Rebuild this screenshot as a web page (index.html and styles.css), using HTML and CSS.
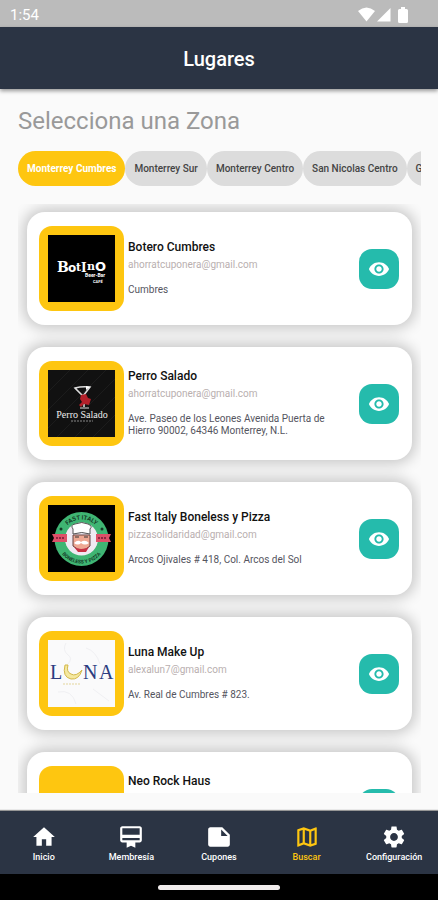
FILE: index.html
```html
<!DOCTYPE html>
<html lang="es">
<head>
    <meta charset="UTF-8">
    <meta name="viewport" content="width=device-width, initial-scale=1.0">
    <title>Lugares</title>
    <link rel="stylesheet" href="styles.css">
</head>
<body>

    <!-- Iconos compartidos -->
    <svg class="iconos" aria-hidden="true">
        <symbol id="ojo" viewBox="0 0 24 24">
            <path d="M12 4.5C7 4.5 2.73 7.61 1 12c1.73 4.39 6 7.5 11 7.5s9.27-3.11 11-7.5c-1.73-4.39-6-7.5-11-7.5zM12 17c-2.76 0-5-2.24-5-5s2.24-5 5-5 5 2.24 5 5-2.24 5-5 5zm0-8c-1.66 0-3 1.34-3 3s1.34 3 3 3 3-1.34 3-3-1.34-3-3-3z"/>
        </symbol>
    </svg>

    <!-- Barra de estado -->
    <div class="estado">
        <span>1:54</span>
        <div class="estado-iconos">
            <svg width="17" height="15" viewBox="0 0 17 15"><path d="M0 4Q8.500-3 17 4L8.500 14.500z"/></svg>
            <svg width="15" height="15" viewBox="0 0 15 15"><path d="M14.500 1v13.500H1z"/></svg>
            <svg class="bateria" width="10" height="16" viewBox="0 0 10 16"><path d="M3 0h4v2h1.500Q10 2 10 3.500v11Q10 16 8.500 16h-7Q0 16 0 14.500v-11Q0 2 1.500 2H3z"/></svg>
        </div>
    </div>

    <header class="encabezado">
        <h1>Lugares</h1>
    </header>

    <main class="contenido">
        <h2>Selecciona una Zona</h2>

        <!-- Zonas -->
        <div class="zonas">
            <button class="zona activa">Monterrey Cumbres</button>
            <button class="zona">Monterrey Sur</button>
            <button class="zona">Monterrey Centro</button>
            <button class="zona">San Nicolas Centro</button>
            <button class="zona">Guadalupe</button>
        </div>

        <!-- Lista de lugares -->
        <div class="lugares">
            <article class="lugar">
                <div class="logo">
                    <svg viewBox="0 0 67 67" role="img" aria-label="Botero">
                        <rect width="67" height="67" fill="#000"/>
                        <g fill="#fff" font-family="DejaVu Serif, serif" font-weight="bold">
                            <text x="9" y="37" font-size="14">B</text>
                            <text x="20" y="37" font-size="12" font-family="DejaVu Sans, sans-serif">o</text>
                            <text x="28" y="36" font-size="11">t</text>
                            <text x="33" y="37" font-size="12">I</text>
                            <text x="39" y="35" font-size="11">n</text>
                            <text x="47" y="36" font-size="13" font-family="DejaVu Sans, sans-serif">O</text>
                            <text x="37" y="42" font-size="5" font-family="Roboto, sans-serif">Beer-Bar</text>
                            <text x="45" y="48" font-size="4" font-family="Roboto, sans-serif">CAFÉ</text>
                        </g>
                    </svg>
                </div>
                <div class="datos">
                    <h3>Botero Cumbres</h3>
                    <p class="correo">ahorratcuponera@gmail.com</p>
                    <p class="direccion">Cumbres</p>
                </div>
                <button class="ver" aria-label="Ver Botero Cumbres"><svg><use href="#ojo"/></svg></button>
            </article>

            <article class="lugar">
                <div class="logo">
                    <svg viewBox="0 0 67 67" role="img" aria-label="Perro Salado">
                        <rect width="67" height="67" fill="#111"/>
                        <path d="M0 22L22 0M0 40L40 0M0 58L58 0M9 67L67 9M27 67L67 27M45 67L67 45" stroke="#1c1c1c"/>
                        <path d="M27 18q7-2 15-1l-7 9zM36 27v10" fill="none" stroke="#ddd" stroke-width="1.500"/>
                        <path d="M38 16l4 1-4 3z" fill="#fff"/>
                        <path d="M33 25l5-1 2 4 3 1-2 6-5-1-3 3-2-2 3-3-2-3z" fill="#b3202a"/>
                        <path d="M32 38h9" stroke="#ddd"/>
                        <text x="34" y="48" font-size="10" fill="#eee" text-anchor="middle" font-family="Liberation Serif, serif">Perro Salado</text>
                        <path d="M23 51h22" stroke="#888" stroke-dasharray="2 1"/>
                    </svg>
                </div>
                <div class="datos">
                    <h3>Perro Salado</h3>
                    <p class="correo">ahorratcuponera@gmail.com</p>
                    <p class="direccion">Ave. Paseo de los Leones Avenida Puerta de Hierro 90002, 64346 Monterrey, N.L.</p>
                </div>
                <button class="ver" aria-label="Ver Perro Salado"><svg><use href="#ojo"/></svg></button>
            </article>

            <article class="lugar">
                <div class="logo">
                    <svg viewBox="0 0 67 67" role="img" aria-label="Fast Italy">
                        <defs>
                            <path id="arco-arriba" d="M14 34a19.500 19.500 0 0 1 39 0"/>
                            <path id="arco-abajo" d="M9 34a24.500 24.500 0 0 0 49 0"/>
                        </defs>
                        <rect width="67" height="67" fill="#000"/>
                        <circle cx="33.500" cy="34" r="27" fill="#3fb573"/>
                        <circle cx="33.500" cy="34" r="16.500" fill="#efeaf2"/>
                        <g font-family="Roboto, sans-serif" font-size="6" font-weight="bold" fill="#153b27" text-anchor="middle">
                            <text><textPath href="#arco-arriba" startOffset="50%">FAST ITALY</textPath></text>
                            <text font-size="5"><textPath href="#arco-abajo" startOffset="50%">BONELESS Y PIZZA</textPath></text>
                        </g>
                        <path d="M4 29h15v8H4l2-4zM63 29H48v8h15l-2-4z" fill="#dd5068"/>
                        <path d="M8 33h9M50 33h9" stroke="#8d2740" stroke-width="2" stroke-dasharray="2 1"/>
                        <circle cx="13" cy="24" r="1.500" fill="#153b27"/>
                        <circle cx="54" cy="24" r="1.500" fill="#153b27"/>
                        <path d="M25 30h17v11q-8 8-17 0z" fill="#eea893" stroke="#644"/>
                        <path d="M25 29v-5q-3-4 2-5 7-3 13 0 5 2 2 5v5q-8-3-17 0z" fill="#fff" stroke="#555"/>
                        <path d="M27 32h4M36 32h4" stroke="#333"/>
                        <path d="M26 38q4-4 7-1 4-3 8 1-4 3-8 0-3 3-7 0z" fill="#fff"/>
                        <path d="M26 42q7 4 15 0l-3 5h-8z" fill="#c73245"/>
                    </svg>
                </div>
                <div class="datos">
                    <h3>Fast Italy Boneless y Pizza</h3>
                    <p class="correo">pizzasolidaridad@gmail.com</p>
                    <p class="direccion">Arcos Ojivales # 418, Col. Arcos del Sol</p>
                </div>
                <button class="ver" aria-label="Ver Fast Italy Boneless y Pizza"><svg><use href="#ojo"/></svg></button>
            </article>

            <article class="lugar">
                <div class="logo">
                    <svg viewBox="0 0 67 67" role="img" aria-label="Luna">
                        <rect width="67" height="67" fill="#fafafb"/>
                        <path d="M18 3q-4 7 2 12 5 3 0 9M38 8q10 3 14 16M10 52q14-3 18 12M45 49l16 12" fill="none" stroke="#f0f0f3"/>
                        <g font-family="Liberation Serif, serif" font-size="20" fill="#2c3c80">
                            <text x="2" y="39">L</text>
                            <text x="35" y="39">N</text>
                            <text x="51" y="39">A</text>
                        </g>
                        <path d="M17 25q-3 12 6 14 8 1 11-9-6 7-11 4-5-2-3-9z" fill="#f4e8a0" stroke="#d3b84b"/>
                        <path d="M15 44h18" stroke="#e3d59c" stroke-dasharray="2 1"/>
                    </svg>
                </div>
                <div class="datos">
                    <h3>Luna Make Up</h3>
                    <p class="correo">alexalun7@gmail.com</p>
                    <p class="direccion">Av. Real de Cumbres # 823.</p>
                </div>
                <button class="ver" aria-label="Ver Luna Make Up"><svg><use href="#ojo"/></svg></button>
            </article>

            <article class="lugar">
                <div class="logo"></div>
                <div class="datos">
                    <h3>Neo Rock Haus</h3>
                    <p class="correo">ahorratcuponera@gmail.com</p>
                    <p class="direccion">Ave. Paseo de los Leones Avenida Puerta de Hierro, Monterrey, N.L.</p>
                </div>
                <button class="ver" aria-label="Ver Neo Rock Haus"><svg><use href="#ojo"/></svg></button>
            </article>
        </div>
    </main>

    <!-- Menú inferior -->
    <nav class="menu">
        <a href="#">
            <svg viewBox="0 0 24 24"><path d="M10 20v-6h4v6h5v-8h3L12 3 2 12h3v8z"/></svg>
            Inicio
        </a>
        <a href="#">
            <svg viewBox="0 0 24 24"><path d="M20 2H4c-1.110 0-2 .89-2 2v11c0 1.110.89 2 2 2h4v5l4-2 4 2v-5h4c1.110 0 2-.89 2-2V4c0-1.110-.89-2-2-2zm0 13H4v-2h16v2zm0-5H4V4h16v6z"/></svg>
            Membresía
        </a>
        <a href="#">
            <svg viewBox="0 0 24 24"><path fill-rule="evenodd" d="M4 3h11l7 7v9c0 1.100-.9 2-2 2H4c-1.100 0-2-.9-2-2V5c0-1.100.9-2 2-2zm10 2v6h6z"/></svg>
            Cupones
        </a>
        <a href="#" class="actual">
            <svg viewBox="0 0 24 24"><path d="M20.500 3l-.16.030L15 5.100 9 3 3.360 4.900c-.21.070-.36.250-.36.480V20.500c0 .28.220.5.500.5l.16-.030L9 18.900l6 2.100 5.640-1.900c.21-.070.36-.250.36-.480V3.500c0-.28-.22-.5-.5-.5zM10 5.470l4 1.400v11.660l-4-1.400V5.470zm-5 .99l3-1.010v11.700l-3 1.160V6.460zm14 11.080l-3 1.010V6.860l3-1.160v11.840z"/></svg>
            Buscar
        </a>
        <a href="#">
            <svg viewBox="0 0 24 24"><path d="M19.140 12.940c.04-.3.060-.61.060-.94 0-.32-.02-.64-.07-.94l2.030-1.580c.18-.14.230-.41.120-.61l-1.920-3.320c-.12-.22-.37-.29-.59-.22l-2.390.96c-.5-.38-1.030-.7-1.620-.94l-.36-2.540c-.04-.24-.24-.41-.48-.41h-3.840c-.24 0-.43.170-.47.410l-.36 2.540c-.59.240-1.130.57-1.620.94l-2.390-.96c-.22-.08-.47 0-.59.220L2.740 8.870c-.12.210-.08.470.12.610l2.030 1.580c-.05.3-.09.630-.09.940s.02.640.07.940l-2.030 1.580c-.18.140-.23.410-.12.610l1.920 3.320c.12.220.37.290.59.220l2.390-.96c.5.380 1.030.7 1.620.94l.36 2.540c.05.240.24.410.48.410h3.840c.24 0 .44-.17.470-.41l.36-2.540c.59-.24 1.130-.56 1.620-.94l2.390.96c.22.080.47 0 .59-.22l1.920-3.320c.12-.22.070-.47-.12-.61l-2.010-1.580zM12 15.600c-1.980 0-3.600-1.620-3.600-3.600s1.620-3.600 3.600-3.600 3.600 1.620 3.600 3.600-1.620 3.600-3.600 3.600z"/></svg>
            Configuración
        </a>
    </nav>
    <div class="gestos"><span></span></div>

</body>
</html>
```

FILE: styles.css
```css
/* Estilos generales */
* {
    box-sizing: border-box;
}

body {
    margin: 0;
    height: 100vh;
    display: flex;
    flex-direction: column;
    background-color: #fafafa;
    font-family: Roboto, sans-serif;
}

h1, h2, h3, p {
    margin: 0;
}

button {
    border: none;
    font-family: inherit;
    cursor: pointer;
}

svg {
    display: block;
    fill: currentColor;
}

.iconos {
    display: none;
}

/* Barra de estado */
.estado {
    display: flex;
    justify-content: space-between;
    align-items: center;
    height: 27px;
    padding: 2px 30px 0 10px;
    background-color: #bbb;
    color: white;
    font-size: 15px;
}

.estado-iconos {
    display: flex;
    align-items: center;
    gap: 1px;
}

.bateria {
    margin-left: 6px;
}

/* Encabezado */
.encabezado {
    display: flex;
    justify-content: center;
    align-items: center;
    height: 62px;
    padding-top: 2px;
    background-color: #2b3444;
    box-shadow: 0 2px 4px rgba(0, 0, 0, 0.4);
    color: white;
}

.encabezado h1 {
    font-size: 20px;
    font-weight: 500;
}

/* Contenido */
.contenido {
    flex: 1;
    min-height: 0;
    display: flex;
    flex-direction: column;
    padding: 16px 17px 18px 18px;
}

.contenido h2 {
    color: #999;
    font-size: 24px;
    font-weight: 400;
    line-height: 32px;
    margin-bottom: 14px;
}

/* Zonas */
.zonas {
    display: flex;
    flex-shrink: 0;
    overflow-x: auto;
    scrollbar-width: none;
    margin-bottom: 18px;
}

.zona {
    flex-shrink: 0;
    height: 35px;
    padding: 0 9px;
    border-radius: 18px;
    background-color: #dcdcdc;
    color: #444;
    font-size: 10px;
    font-weight: 500;
}

.activa {
    background-color: #fec610;
    color: white;
    font-weight: 700;
}

/* Lista de lugares */
.lugares {
    flex: 1;
    min-height: 0;
    display: flex;
    flex-direction: column;
    gap: 22px;
    padding: 8px 9px;
    overflow-y: auto;
    scrollbar-width: none;
}

.lugar {
    display: flex;
    flex-shrink: 0;
    align-items: center;
    padding: 14px 13px 14px 12px;
    border-radius: 18px;
    background-color: white;
    box-shadow: 0 0 14px 4px rgba(0, 0, 0, 0.2);
}

.logo {
    flex-shrink: 0;
    width: 85px;
    height: 85px;
    padding: 9px;
    border-radius: 13px;
    background-color: #fec610;
}

.datos {
    flex: 1;
    padding: 0 24px 3px 4px;
}

.datos h3 {
    color: #111;
    font-size: 12px;
    font-weight: 500;
    line-height: 18px;
}

.correo {
    color: #b9afaf;
    font-size: 10px;
    line-height: 18px;
    margin-bottom: 10px;
}

.direccion {
    color: #555560;
    font-size: 10px;
    line-height: 12px;
}

.ver {
    flex-shrink: 0;
    display: grid;
    place-items: center;
    width: 40px;
    height: 40px;
    padding: 0;
    border-radius: 13px;
    background-color: #25bbac;
    color: white;
}

.ver svg {
    width: 22px;
    height: 22px;
}

/* Menú inferior */
.menu {
    display: flex;
    justify-content: space-between;
    height: 63px;
    padding-top: 13px;
    background-color: #2b3444;
    box-shadow: 0 -1px 1px rgba(0, 0, 0, 0.4);
}

.menu a {
    flex: 1;
    display: flex;
    flex-direction: column;
    align-items: center;
    gap: 1px;
    color: white;
    font-size: 9px;
    font-weight: 500;
    line-height: 12px;
    text-decoration: none;
}

.menu svg {
    width: 26px;
    height: 26px;
}

.menu .actual {
    color: #fec610;
}

/* Barra de gestos */
.gestos {
    display: flex;
    justify-content: center;
    align-items: center;
    height: 26px;
    background-color: black;
}

.gestos span {
    width: 122px;
    height: 5px;
    border-radius: 3px;
    background-color: #f0ecec;
}
```
